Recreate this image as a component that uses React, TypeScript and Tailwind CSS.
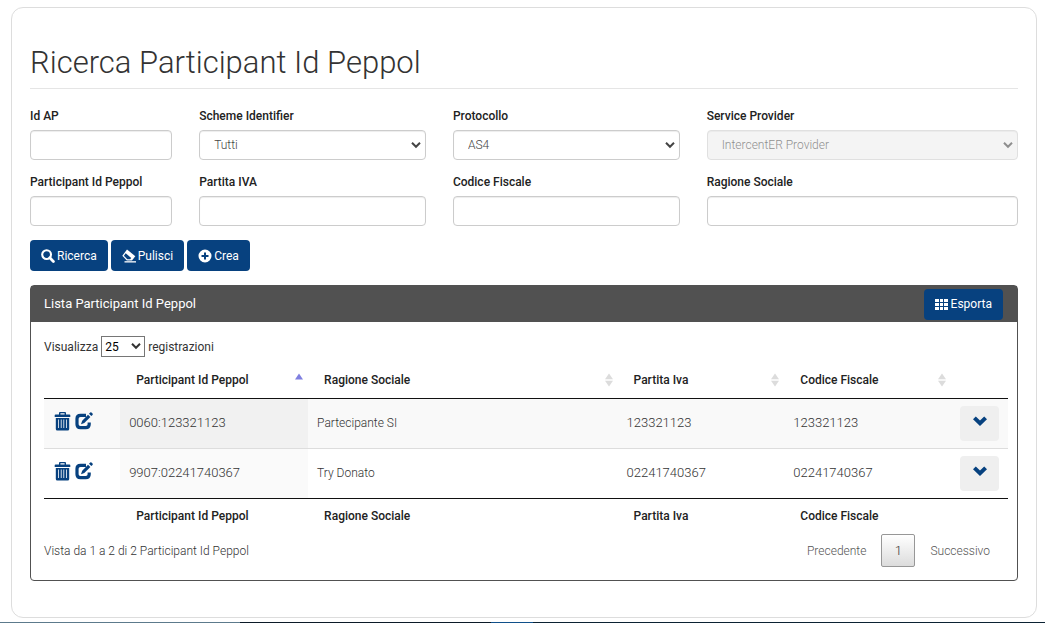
import React, { useState } from "react";

type IconProps = { className?: string };

function SearchIcon({ className }: IconProps) {
  return (
    <svg viewBox="0 0 14 14" className={className} fill="none" stroke="currentColor" aria-hidden="true">
      <circle cx="5.6" cy="5.6" r="4.4" strokeWidth="2.1" />
      <path d="M8.800 8.800 12.400 12.400" strokeWidth="2.800" strokeLinecap="round" />
    </svg>
  );
}

function EraserIcon({ className }: IconProps) {
  return (
    <svg viewBox="0 0 14 14" className={className} aria-hidden="true">
      <path d="M5 .5 13.300 7.200 10 11.400H4.800L.3 6.700Z" fill="currentColor" />
      <path d="M3.700 4.200 9.200 9 8.200 10.300H5.300L1.900 6.700Z" className="fill-[#07417f]" />
      <path d="M2.500 12.200h11.500v1.300H2.500z" fill="currentColor" />
    </svg>
  );
}

function PlusIcon({ className }: IconProps) {
  return (
    <svg viewBox="0 0 14 14" className={className} aria-hidden="true">
      <path
        fill="currentColor"
        fillRule="evenodd"
        d="M7 .5a6.500 6.500 0 1 1 0 13A6.500 6.500 0 0 1 7 .5ZM6 3.500V6H3.500v2H6v2.500h2V8h2.500V6H8V3.500Z"
      />
    </svg>
  );
}

function GridIcon({ className }: IconProps) {
  return (
    <svg viewBox="0 0 13 13" className={className} fill="currentColor" aria-hidden="true">
      <path d="M0 1h4v3H0zM5 1h3v3H5zM9 1h4v3H9zM0 5h4v3H0zM5 5h3v3H5zM9 5h4v3H9zM0 9h4v3H0zM5 9h3v3H5zM9 9h4v3H9z" />
    </svg>
  );
}

function TrashIcon({ className }: IconProps) {
  return (
    <svg viewBox="0 0 17 19" className={className} aria-hidden="true">
      <path
        fill="currentColor"
        fillRule="evenodd"
        d="M6 0h5q1 0 1 1V2.500h3.500q.8 0 .8.8V5H.7V3.300Q.7 2.500 1.500 2.500H5V1q0-1 1-1ZM6.400 1.300V2.500h4.200V1.300ZM1.800 6h13.400v11q0 1.500-1.500 1.500H3.300q-1.500 0-1.500-1.500ZM4.200 7.500V16h.8V7.500ZM6.800 7.500V16h.8V7.500ZM9.400 7.500V16h.8V7.500ZM12 7.500V16h.8V7.500Z"
      />
    </svg>
  );
}

function EditIcon({ className }: IconProps) {
  return (
    <svg viewBox="0 0 18 18" className={className} aria-hidden="true">
      <path
        d="M11 3.400H5.500Q2 3.400 2 6.800V12.200q0 3.400 3.400 3.400h5.400Q14.200 15.600 14.200 12.200v-1.700"
        fill="none"
        stroke="currentColor"
        strokeWidth="3.200"
      />
      <path d="M13 2.700 15.400 5.100 9.300 11 6 12.200 7.200 8.800Z" fill="currentColor" />
      <path d="M14 1.800 15.200.6q.7-.6 1.300 0l1 1q.6.700 0 1.300L16.300 4.100Z" fill="currentColor" />
    </svg>
  );
}

function ChevronIcon({ className }: IconProps) {
  return (
    <svg viewBox="0 0 16 12" className={className} aria-hidden="true">
      <path d="M1 4.200 3.800 1.400 8 5.400 12.200 1.400 15 4.200 8 11Z" fill="currentColor" />
    </svg>
  );
}

function CaretIcon({ className }: IconProps) {
  return (
    <svg viewBox="0 0 10 8" className={className} fill="none" stroke="currentColor" strokeWidth="2" aria-hidden="true">
      <path d="M1 1.800 5 5.800 9 1.800" />
    </svg>
  );
}

function SortIcon({ ascending }: { ascending?: boolean }) {
  return (
    <svg viewBox="0 0 8 14" className="h-[14px] w-2 shrink-0" aria-hidden="true">
      {ascending ? (
        <path d="M0 6.500h8L4 .5Z" className="fill-[#7f7fe0]" />
      ) : (
        <path d="M0 6.300h8L4 .5ZM0 7.700h8L4 13.500Z" className="fill-[#dcdcdc]" />
      )}
    </svg>
  );
}

const controlBox =
  "h-[30px] w-full rounded border border-[#ccc] bg-white shadow-[inset_0_1px_1px_rgba(0,0,0,0.075)]";

function Field({ id, label, span, children }: { id: string; label: string; span: string; children?: React.ReactNode }) {
  return (
    <div className={span}>
      <label htmlFor={id} className="block h-[22px] text-xs leading-4 font-medium text-[#222]">
        {label}
      </label>
      {children ?? <input id={id} type="text" className={`${controlBox} block px-3 text-xs`} />}
    </div>
  );
}

function SelectBox({ id, value, disabled }: { id: string; value: string; disabled?: boolean }) {
  return (
    <div className={disabled ? "relative opacity-60" : "relative"}>
      <select
        id={id}
        disabled={disabled}
        className={`${controlBox} block appearance-none px-[14px] text-xs font-light text-[#444] disabled:bg-[#eee]`}
      >
        <option>{value}</option>
      </select>
      <CaretIcon className="pointer-events-none absolute top-[11px] right-[5px] h-2 w-[10px] text-[#444]" />
    </div>
  );
}

function ActionButton({ icon, children }: { icon: React.ReactNode; children: React.ReactNode }) {
  return (
    <button
      type="button"
      className="flex h-[31px] items-center gap-[2px] rounded bg-[#07417f] px-[11px] text-xs text-white"
    >
      {icon}
      {children}
    </button>
  );
}

const columns = ["Participant Id Peppol", "Ragione Sociale", "Partita Iva", "Codice Fiscale"];

const rows = [
  { id: "0060:123321123", name: "Partecipante SI", vat: "123321123", tax: "123321123" },
  { id: "9907:02241740367", name: "Try Donato", vat: "02241740367", tax: "02241740367" },
];

export default function App() {
  const [size, setSize] = useState("25");
  return (
    <div className="bg-white pt-[7px] font-[Roboto,'Noto_Sans',sans-serif] text-xs text-[#222]">
      <main className="mr-2 ml-[11px] rounded-xl border border-[#ddd] px-[18px] pt-[35px] pb-9">
        <h1 className="mb-[19px] border-b border-[#e5e5e5] pb-[5px] text-[31px] leading-10 font-light text-[#333]">
          Ricerca Participant Id Peppol
        </h1>

        <form onSubmit={(e) => e.preventDefault()}>
          <div className="grid grid-cols-12 gap-x-[27px] gap-y-[14px]">
            <Field id="idAp" label="Id AP" span="col-span-2" />
            <Field id="scheme" label="Scheme Identifier" span="col-span-3">
              <SelectBox id="scheme" value="Tutti" />
            </Field>
            <Field id="protocol" label="Protocollo" span="col-span-3">
              <SelectBox id="protocol" value="AS4" />
            </Field>
            <Field id="provider" label="Service Provider" span="col-span-4">
              <SelectBox id="provider" value="IntercentER Provider" disabled />
            </Field>
            <Field id="participant" label="Participant Id Peppol" span="col-span-2" />
            <Field id="vat" label="Partita IVA" span="col-span-3" />
            <Field id="tax" label="Codice Fiscale" span="col-span-3" />
            <Field id="company" label="Ragione Sociale" span="col-span-4" />
          </div>
          <div className="mt-[14px] flex gap-[3px]">
            <ActionButton icon={<SearchIcon className="size-[14px]" />}>Ricerca</ActionButton>
            <ActionButton icon={<EraserIcon className="size-[14px]" />}>Pulisci</ActionButton>
            <ActionButton icon={<PlusIcon className="size-[14px]" />}>Crea</ActionButton>
          </div>
        </form>

        <section className="mt-[14px] rounded border border-[#515151]">
          <header className="flex h-9 items-center justify-between bg-[#515151] pr-[14px] pl-[13px]">
            <h2 className="text-[13px] font-normal text-white">Lista Participant Id Peppol</h2>
            <ActionButton icon={<GridIcon className="mr-px size-[13px]" />}>Esporta</ActionButton>
          </header>

          <div className="pr-[9px] pb-[13px] pl-[13px]">
            <div className="flex items-center gap-[3px] pt-[14px] text-[#333]">
              <label htmlFor="size">Visualizza</label>
              <div className="relative">
                <select
                  id="size"
                  value={size}
                  onChange={(e) => setSize(e.target.value)}
                  className="block h-[21px] w-11 appearance-none border border-[#767676] bg-white pl-[3px] text-xs text-black"
                >
                  <option>25</option>
                  <option>50</option>
                  <option>100</option>
                </select>
                <CaretIcon className="pointer-events-none absolute top-[6px] right-[4px] h-2 w-[10px]" />
              </div>
              <span>registrazioni</span>
            </div>

            <table className="w-full table-fixed border-collapse text-left">
              <colgroup>
                <col className="w-[7.900%]" />
                <col className="w-[19.500%]" />
                <col className="w-[32.100%]" />
                <col className="w-[17.300%]" />
                <col className="w-[17.300%]" />
                <col />
              </colgroup>
              <thead>
                <tr className="h-[41px] border-b border-[#111]">
                  <th />
                  {columns.map((name, i) => (
                    <th key={name} className="pt-[6px] pr-[5px] pb-0 pl-4 font-medium">
                      <div className="flex items-center justify-between">
                        {name}
                        <SortIcon ascending={i === 0} />
                      </div>
                    </th>
                  ))}
                  <th />
                </tr>
              </thead>
              <tbody className="font-light text-[#333]">
                {rows.map((row) => (
                  <tr key={row.id} className="group h-[50px] border-b border-[#ddd] last:border-[#111] odd:bg-[#f9f9f9]">
                    <td className="pb-1 pl-[10px]">
                      <div className="flex gap-1 text-[#07417f]">
                        <button type="button" aria-label="Elimina">
                          <TrashIcon className="h-[19px] w-[17px]" />
                        </button>
                        <button type="button" aria-label="Modifica">
                          <EditIcon className="size-[18px]" />
                        </button>
                      </div>
                    </td>
                    <td className="bg-[#fafafa] px-[9px] text-[13px] group-odd:bg-[#f1f1f1]">{row.id}</td>
                    <td className="px-[9px]">{row.name}</td>
                    <td className="px-[9px] text-[13px]">{row.vat}</td>
                    <td className="px-[9px] text-[13px]">{row.tax}</td>
                    <td className="pl-[9px]">
                      <button
                        type="button"
                        aria-label="Azioni"
                        className="flex h-[35px] w-[39px] items-center justify-center rounded bg-[#efefef] pb-[5px] text-[#07417f]"
                      >
                        <ChevronIcon className="h-3 w-4" />
                      </button>
                    </td>
                  </tr>
                ))}
              </tbody>
              <tfoot>
                <tr className="h-9">
                  <th />
                  {columns.map((name) => (
                    <th key={name} className="pl-4 font-medium">
                      {name}
                    </th>
                  ))}
                  <th />
                </tr>
              </tfoot>
            </table>

            <div className="flex items-center justify-between font-light text-[#333]">
              <p>Vista da 1 a 2 di 2 Participant Id Peppol</p>
              <nav className="flex items-center pr-[18px] text-[#555]">
                <button type="button">Precedente</button>
                <button
                  type="button"
                  aria-current="page"
                  className="mx-[15px] h-[33px] w-[34px] rounded-xs border border-[#979797] bg-linear-to-b from-white to-[#dcdcdc] text-[13px] text-[#333]"
                >
                  1
                </button>
                <button type="button">Successivo</button>
              </nav>
            </div>
          </div>
        </section>
      </main>
      <div className="mt-1 flex h-px">
        <div className="w-[23%] bg-[#5c7a8c]" />
        <div className="w-[24%] bg-[#0b1a28]" />
        <div className="w-[4%] bg-[#10508a]" />
        <div className="flex-1 bg-[#0b2233]" />
      </div>
    </div>
  );
}
